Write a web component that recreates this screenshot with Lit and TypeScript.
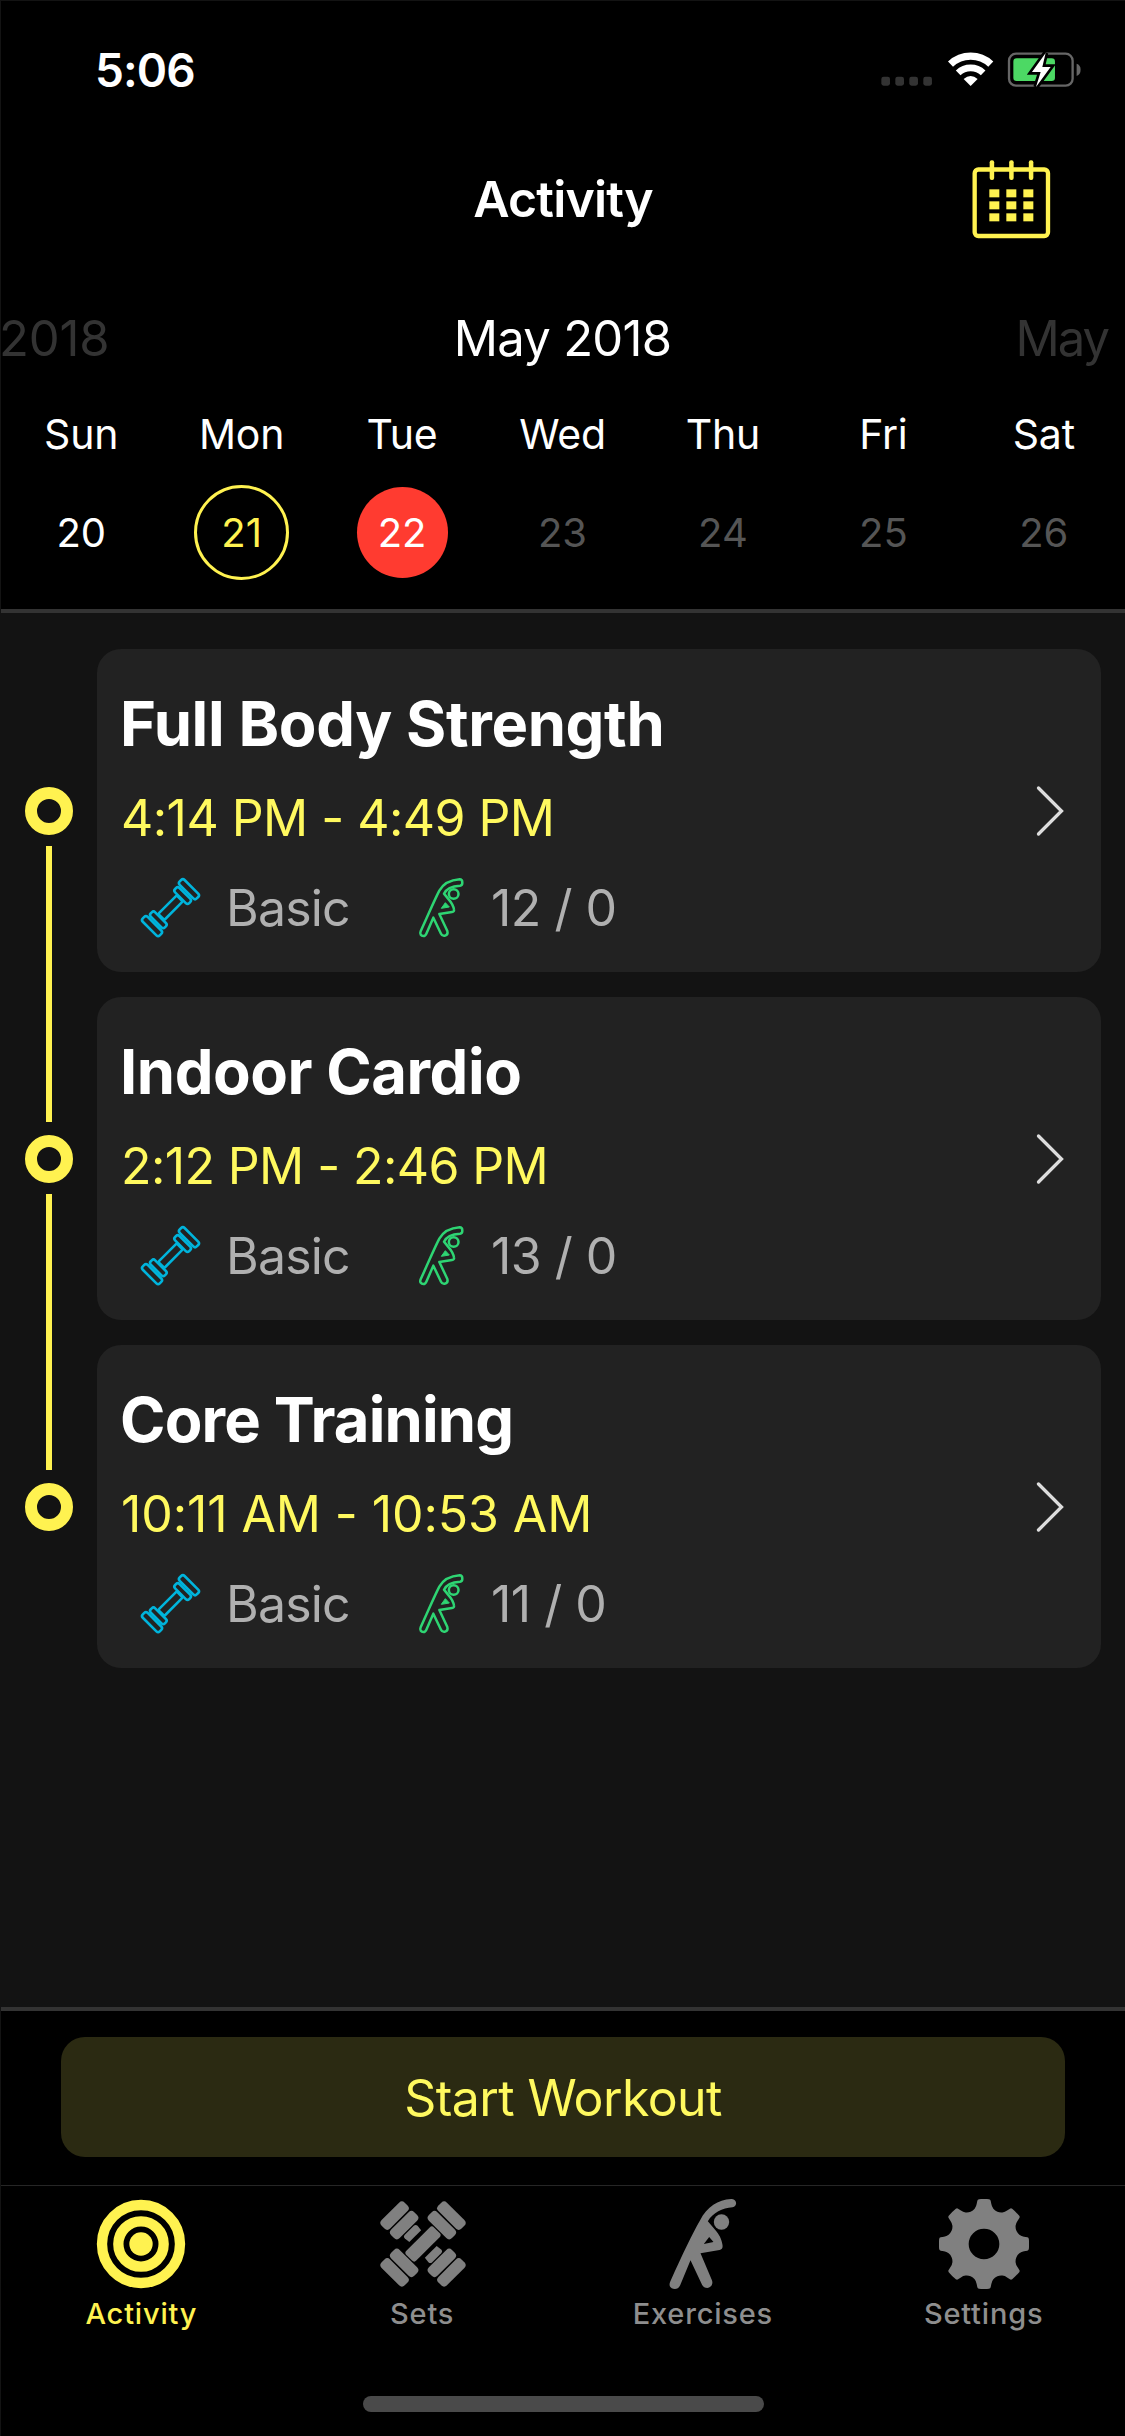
import { LitElement, html, svg, css } from "lit";
import { customElement } from "lit/decorators.js";
import { classMap } from "lit/directives/class-map.js";
import { styleMap } from "lit/directives/style-map.js";

interface Day { name: string; date: number; state: "past" | "marked" | "selected" | "future"; }
interface Workout { title: string; time: string; level: string; count: string; titleTracking: number; timeTracking: number; }

const days: Day[] = [
  { name: "Sun", date: 20, state: "past" },
  { name: "Mon", date: 21, state: "marked" },
  { name: "Tue", date: 22, state: "selected" },
  { name: "Wed", date: 23, state: "future" },
  { name: "Thu", date: 24, state: "future" },
  { name: "Fri", date: 25, state: "future" },
  { name: "Sat", date: 26, state: "future" },
];

const workouts: Workout[] = [
  { title: "Full Body Strength", time: "4:14 PM - 4:49 PM", level: "Basic", count: "12 / 0", titleTracking: -0.35, timeTracking: -0.55 },
  { title: "Indoor Cardio", time: "2:12 PM - 2:46 PM", level: "Basic", count: "13 / 0", titleTracking: -0.45, timeTracking: -0.6 },
  { title: "Core Training", time: "10:11 AM - 10:53 AM", level: "Basic", count: "11 / 0", titleTracking: -0.85, timeTracking: -0.1 },
];

const signalIcon = html`<svg width="53.3" height="37.3" viewBox="60 64 160 112" fill="#333">
  ${[64, 106, 148, 190].map((x) => svg`<rect x=${x} y="141" width="26" height="27" rx="7"/>`)}
</svg>`;

const wifiIcon = html`<svg width="47.3" height="37.3" viewBox="260 64 142 112" fill="none" stroke="#fff">
  <path stroke-width="22" d="M270.500 103.500A88.500 88.500 0 0 1 391.500 103.500"/>
  <path stroke-width="20" d="M293.500 130A54 54 0 0 1 368.500 130"/>
  <path fill="#fff" stroke="none" d="M310 148Q331 130 352 148L331 169Z"/>
</svg>`;

const batteryIcon = html`<svg width="75.3" height="37.3" viewBox="442 64 226 112">
  <rect x="448" y="72" width="191" height="96" rx="21" fill="none" stroke="#666" stroke-width="7"/>
  <path fill="#666" d="M651 102Q663 106 663 120T651 139Z"/>
  <rect x="461" y="86" width="125" height="68" rx="10" fill="#4cd964"/>
  <path fill="#fff" stroke="#000" stroke-width="16" paint-order="stroke" d="M558 70L517 127H543L529 172L573 112H548Z"/>
</svg>`;

const calendarIcon = html`<svg width="79" height="79" viewBox="335 389 237 237" fill="#fff250">
  <rect x="343" y="417.500" width="220" height="199.500" rx="11" fill="none" stroke="#fff250" stroke-width="13"/>
  ${[388, 446.5, 505.5].map((x) => svg`<rect x=${x} y="390" width="13.500" height="59" rx="6"/>`)}
  ${[477, 513, 549].map((y) => [387, 438, 489].map((x) => svg`<rect x=${x} y=${y} width="30" height="24"/>`))}
</svg>`;

const dumbbellIcon = html`<svg width="67" height="67" viewBox="54 43 195 195" fill="none" stroke="#00b4dc" stroke-width="7.500">
  <g transform="translate(151.500 141) rotate(-45)">
    <rect x="-38" y="-12.500" width="76" height="25" rx="4"/>
    <rect x="41" y="-29" width="18" height="58" rx="7"/>
    <rect x="66" y="-35" width="20" height="70" rx="7"/>
    <rect x="-59" y="-29" width="18" height="58" rx="7"/>
    <rect x="-86" y="-35" width="20" height="70" rx="7"/>
  </g>
</svg>`;

const stretchIcon = html`<svg width="50" height="65" viewBox="890 43 150 195" fill="none" stroke="#2ed573" stroke-width="7.500" stroke-linejoin="round">
  <path d="M1018 56C990 58 971 66 957 90C942 119 927 155 901 212C897 221 903 226 909 226Q915 226 918 219L939 171L962 219Q966 227 974 225Q984 222 981 211L957 160L995 154Q1002 153 1001 147C999 133 992 124 985 116L971 99C979 82 999 76 1019 75Q1026 74 1026 66Q1026 56 1018 56Z"/>
  <circle cx="1000" cy="100" r="14.500"/>
  <path fill="#2ed573" stroke-width="3" d="M975 126L987 139L963 143Z"/>
</svg>`;

const chevronIcon = html`<svg width="30" height="54" viewBox="0 0 30 54" fill="none" stroke="#ddd" stroke-width="3.300" stroke-linecap="round">
  <path d="M3.500 4L26.500 27L3.500 50"/>
</svg>`;

const targetIcon = html`<svg width="90" height="90" viewBox="-135 -135 270 270" fill="none" stroke="#fff250">
  <circle r="117" stroke-width="31"/><circle r="68" stroke-width="31"/><circle r="35" fill="#fff250" stroke="none"/>
</svg>`;

const setsIcon = html`<svg width="90" height="90" viewBox="-138 -135 270 270" fill="#808080">
  ${[-45, 45, 135, 225].map((a) => svg`<g transform="rotate(${a})">
    <rect x="62" y="-49" width="36" height="98" rx="12"/>
    <rect x="102.500" y="-49" width="36" height="98" rx="12"/>
  </g>`)}
  <g transform="rotate(-45)">
    <rect x="-58.500" y="-21" width="117" height="42" rx="9"/>
    <path d="M-25 -33L-27 -50Q-27 -58 -19 -58H19Q27 -58 27 -50L25 -33Z"/>
    <path d="M-25 33L-27 50Q-27 58 -19 58H19Q27 58 27 50L25 33Z"/>
  </g>
</svg>`;

const exerciseIcon = html`<svg width="90" height="90" viewBox="115.500 57 270 270" fill="#808080">
  <path fill-rule="evenodd" d="M335 57C295 60 264 78 241 122C218 162 190 220 152 305C146 320 156 327 166 327Q177 327 182 316L213 241L248 315Q253 324 263 324C275 323 282 312 277 300L243 220L300 210Q311 208 309 195C306 175 298 163 288 151L265 124C281 97 308 85 339 82C355 80 353 56 335 57ZM269 171L282 186L253 192Z"/>
  <circle cx="306" cy="126" r="23"/>
</svg>`;

/* One tooth and the notch after it, repeated every 45 degrees. */
const gearPath = (() => {
  const at = (x: number, y: number, deg: number) => {
    const r = (deg * Math.PI) / 180;
    return `${(x * Math.cos(r) - y * Math.sin(r)).toFixed(2)} ${(x * Math.sin(r) + y * Math.cos(r)).toFixed(2)}`;
  };
  let d = "";
  for (let a = 0; a < 360; a += 45) {
    d += `${a ? "L" : "M"}${at(-22, -120, a)}L${at(-20, -130, a)}Q${at(-19, -134, a)} ${at(-15, -134.5, a)}`;
    d += `Q${at(0, -136, a)} ${at(15, -134.5, a)}Q${at(19, -134, a)} ${at(20, -130, a)}L${at(22, -120, a)}`;
    d += `A30 30 0 0 0 ${at(-22, -120, a + 45)}`;
  }
  return d + "ZM46 0A46 46 0 1 0 -46 0A46 46 0 1 0 46 0Z";
})();
const gearIcon = html`<svg width="90" height="90" viewBox="-135 -135 270 270" fill="#808080"><path fill-rule="evenodd" d=${gearPath}/></svg>`;

const tabs = [
  { label: "Activity", icon: targetIcon, active: true },
  { label: "Sets", icon: setsIcon, active: false },
  { label: "Exercises", icon: exerciseIcon, active: false },
  { label: "Settings", icon: gearIcon, active: false },
];

@customElement("app-root")
export class AppRoot extends LitElement {
  static styles = css`
    :host {
      display: flex;
      flex-direction: column;
      box-sizing: border-box;
      height: 2436px;
      border-top: 1px solid #131313;
      border-left: 1px solid #131313;
      overflow: hidden;
      background: #131313;
      color: #fff;
      font-family: Inter, "Liberation Sans", sans-serif;
    }
    * { box-sizing: border-box; }
    svg { display: block; flex: none; }
    header { background: #000; border-bottom: 4px solid #333; }
    .status { display: flex; align-items: center; height: 138px; padding: 0 42.300px 0 94px; gap: 13.300px; }
    .clock { flex: 1; font-size: 46px; font-weight: 600; letter-spacing: -0.9px; }
    .nav { display: grid; grid-template-columns: 1fr auto 1fr; align-items: center; height: 120px; padding: 0 74px; }
    .nav h1 { grid-column: 2; margin: 0; font-size: 50px; font-weight: 600; letter-spacing: -0.8px; }
    .nav svg { justify-self: end; }
    .months { display: grid; grid-template-columns: 1fr auto 1fr; height: 159px; padding-right: 17px; font-size: 49px; line-height: 159px; letter-spacing: -0.75px; white-space: nowrap; }
    .month { color: #333; }
    .month.previous { margin-left: -2px; letter-spacing: -0.2px; }
    .month.current { margin-left: 16px; color: #fff; }
    .month.next { justify-self: end; letter-spacing: -2px; }
    .week { display: grid; grid-template-columns: repeat(7, 1fr); height: 191px; padding-right: 1px; }
    .day { display: flex; flex-direction: column; align-items: center; }
    .name { font-size: 41px; line-height: 32px; letter-spacing: -0.2px; }
    .date { display: grid; place-items: center; width: 95px; height: 95px; margin-top: 34.500px; padding-top: 1px; border-radius: 50%; font-size: 40px; line-height: 48px; }
    .marked .date { border: 3px solid #fff250; color: #fff250; }
    .selected .date { width: 91px; height: 91px; margin-top: 36.500px; background: #ff3b30; }
    .future .date { color: #555; }
    main { flex: 1; display: flex; padding: 36px 24px 0 0; }
    .rail { display: flex; flex-direction: column; align-items: center; width: 96px; padding-top: 137.500px; }
    .dot { width: 48px; height: 48px; flex: none; border: 12px solid #fff250; border-radius: 50%; }
    .line { width: 6px; height: 276px; flex: none; margin: 11px 0 13px; background: #fff250; }
    .cards { flex: 1; display: flex; flex-direction: column; gap: 25px; }
    .card { display: flex; align-items: center; justify-content: space-between; height: 323px; padding: 0 36px 0 23px; border-radius: 24px; background: #222; }
    .info { height: 323px; padding-top: 34px; }
    h2 { margin: 0; font-size: 61.500px; font-weight: 700; line-height: 81px; }
    .time { padding-left: 1px; line-height: 108px; font-size: 50px; color: #fff95f; }
    .meta { display: flex; align-items: center; height: 71px; padding-left: 17px; font-size: 50px; letter-spacing: -0.8px; color: #b0b0b0; }
    .level { box-sizing: content-box; width: 191px; padding-left: 22px; }
    .count { padding-left: 24px; letter-spacing: -0.5px; }
    .action { height: 178px; padding: 26px 60px 0; background: #000; border-top: 4px solid #333; }
    .start { display: block; width: 100%; height: 120px; padding: 2px 0 0; border: 0; border-radius: 24px; background: #2b2a12; color: #fff95f; font: 400 50px/118px Inter, "Liberation Sans", sans-serif; letter-spacing: -0.6px; }
    footer { background: #000; border-top: 1px solid #262626; height: 251px; }
    .tabs { display: grid; grid-template-columns: repeat(4, 1fr); height: 210px; padding: 13px 1px 0 0; }
    .tab { display: flex; flex-direction: column; align-items: center; gap: 7px; color: #8e8e8e; font-size: 29px; font-weight: 500; line-height: 36px; letter-spacing: 0.8px; }
    .tab.active { color: #fff250; }
    .home { width: 401px; height: 16px; margin: 0 auto; border-radius: 8px; background: #4a4a4a; }
  `;

  render() {
    return html`
      <header>
        <div class="status"><span class="clock">5:06</span>${signalIcon}${wifiIcon}${batteryIcon}</div>
        <div class="nav"><h1>Activity</h1>${calendarIcon}</div>
        <div class="months">
          <span class="month previous">2018</span>
          <span class="month current">May 2018</span>
          <span class="month next">May</span>
        </div>
        <div class="week">
          ${days.map((d) => html`<div class="day ${d.state}"><span class="name">${d.name}</span><span class="date">${d.date}</span></div>`)}
        </div>
      </header>
      <main>
        <div class="rail">
          ${workouts.map((_, i) => html`${i ? html`<div class="line"></div>` : ""}<div class="dot"></div>`)}
        </div>
        <div class="cards">
          ${workouts.map((w) => html`
            <article class="card">
              <div class="info">
                <h2 style=${styleMap({ letterSpacing: `${w.titleTracking}px` })}>${w.title}</h2>
                <div class="time" style=${styleMap({ letterSpacing: `${w.timeTracking}px` })}>${w.time}</div>
                <div class="meta">${dumbbellIcon}<span class="level">${w.level}</span>${stretchIcon}<span class="count">${w.count}</span></div>
              </div>
              ${chevronIcon}
            </article>`)}
        </div>
      </main>
      <div class="action"><button class="start">Start Workout</button></div>
      <footer>
        <nav class="tabs">
          ${tabs.map((t) => html`<div class=${classMap({ tab: true, active: t.active })}>${t.icon}<span>${t.label}</span></div>`)}
        </nav>
        <div class="home"></div>
      </footer>
    `;
  }
}
